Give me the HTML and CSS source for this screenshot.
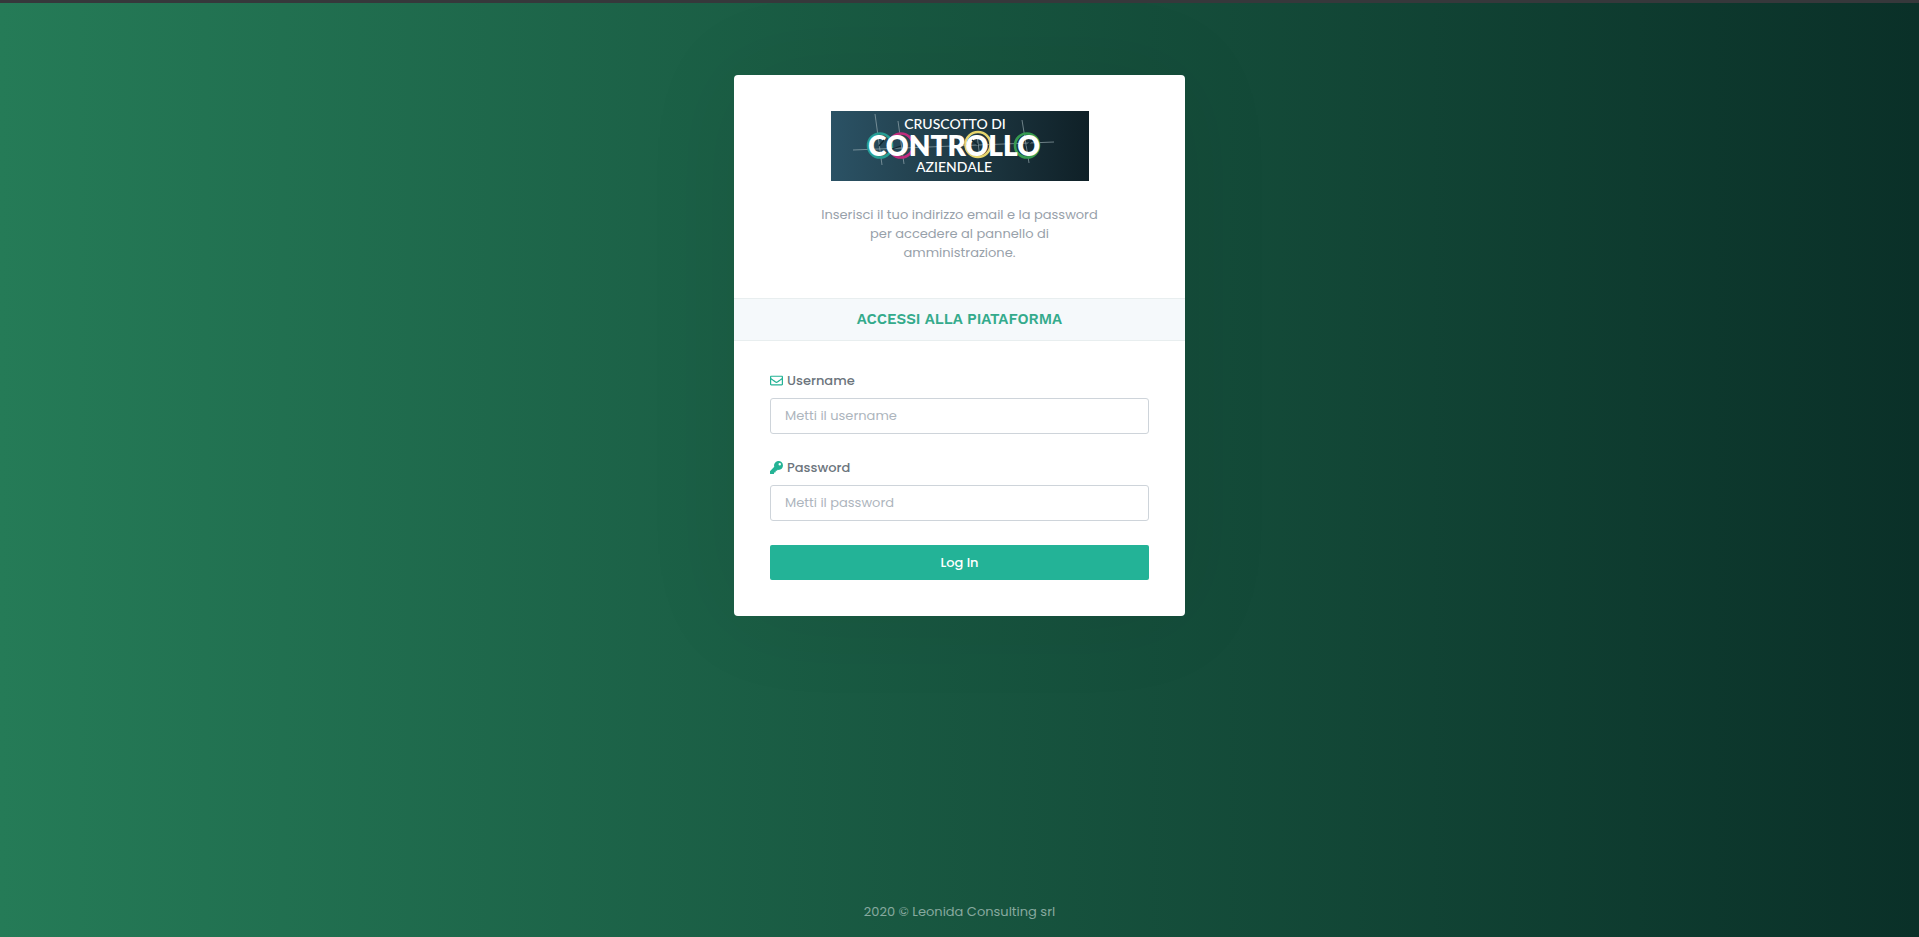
FILE: index.html
```html
<!DOCTYPE html>
<html lang="it">
<head>
<meta charset="utf-8">
<meta name="viewport" content="width=device-width, initial-scale=1">
<title>Cruscotto di Controllo Aziendale</title>
<link rel="stylesheet" href="styles.css">
</head>
<body>
<main class="page">
  <section class="card">
    <header class="intro">
      <svg class="logo" viewBox="0 0 258 70" role="img" aria-label="Cruscotto di Controllo Aziendale">
        <defs>
          <linearGradient id="logo-bg" x1="0" x2="1" y1="0" y2="0">
            <stop offset="0" stop-color="#2b5265"/>
            <stop offset=".5" stop-color="#1f3a45"/>
            <stop offset="1" stop-color="#0f2027"/>
          </linearGradient>
        </defs>
        <rect width="258" height="70" fill="url(#logo-bg)"/>
        <g stroke="#a9bac0" stroke-width=".6" fill="none">
          <path d="M22 39 223 31M44 3 51 54M67 10 73 53M191 9 198 52M146 24 149 47"/>
        </g>
        <g fill="none" stroke-width="2.6">
          <circle cx="49" cy="34.500" r="12" stroke="#279d92"/>
          <circle cx="70" cy="34.500" r="12" stroke="#c02b7c"/>
          <circle cx="147" cy="33.500" r="12.500" stroke="#e6d46c"/>
          <circle cx="196" cy="34.500" r="12" stroke="#369b50"/>
        </g>
        <g class="logo-text">
          <text class="logo-small" x="124" y="18" text-anchor="middle">CRUSCOTTO DI</text>
          <text class="logo-large" x="123" y="45" text-anchor="middle">CONTROLLO</text>
          <text class="logo-small" x="123" y="61" text-anchor="middle">AZIENDALE</text>
        </g>
        <path d="m48 35 5-6M61 38l9-3M147 34l-6-5M196 35l5-6" stroke="#122831" stroke-width="1.300"/>
      </svg>
      <p class="lead">Inserisci il tuo indirizzo email e la password per accedere al pannello di amministrazione.</p>
    </header>
    <h1 class="title">ACCESSI ALLA PIATAFORMA</h1>
    <form class="form">
      <div class="field">
        <label class="label" for="username">
          <svg class="icon" viewBox="0 0 512 512" aria-hidden="true"><path d="M464 64H48C21.500 64 0 85.500 0 112v288c0 26.500 21.500 48 48 48h416c26.500 0 48-21.500 48-48V112c0-26.500-21.500-48-48-48zm0 48v40.800c-22.400 18.300-58.200 46.700-134.600 106.500-16.800 13.200-50.200 45.100-73.400 44.700-23.200.4-56.600-31.500-73.400-44.700C106.200 199.500 70.400 171.100 48 152.800V112h416zM48 400V214.400c22.900 18.200 55.300 43.900 104.900 82.700 21.900 17.200 60.300 55.200 103.100 54.900 42.600.2 80.500-37.200 103.100-54.900 49.500-38.800 82-64.500 104.900-82.700V400H48z"/></svg>
          Username
        </label>
        <input class="input" id="username" type="text" placeholder="Metti il username">
      </div>
      <div class="field">
        <label class="label" for="password">
          <svg class="icon" viewBox="0 0 512 512" aria-hidden="true"><path d="M512 176c0 97.200-78.800 176-176 176-11.200 0-22.200-1.100-32.800-3.100l-24 27A24 24 0 0 1 261.200 384H224v40c0 13.300-10.700 24-24 24h-40v40c0 13.300-10.700 24-24 24H24c-13.300 0-24-10.700-24-24v-78.100c0-6.400 2.500-12.500 7-17l161.800-161.800A176 176 0 1 1 512 176zM336 128a48 48 0 1 0 96 0 48 48 0 1 0-96 0z"/></svg>
          Password
        </label>
        <input class="input" id="password" type="password" placeholder="Metti il password">
      </div>
      <button class="submit" type="submit">Log In</button>
    </form>
  </section>
</main>
<footer class="footer">2020 © Leonida Consulting srl</footer>
</body>
</html>
```
FILE: styles.css
```css
* {
  box-sizing: border-box;
}

body {
  margin: 0;
  min-height: 100vh;
  display: flex;
  flex-direction: column;
  border-top: 3px solid #36383b;
  background: linear-gradient(to right, #257b57, #0a3028);
  color: #6c757d;
  font-family: Poppins, Inter, "Open Sans", sans-serif;
  font-size: 13px;
  line-height: 19px;
}

.page {
  flex: 1;
  display: flex;
  justify-content: center;
  align-items: flex-start;
  padding: 72px 12px 24px;
}

.card {
  width: 100%;
  max-width: 451px;
  overflow: hidden;
  border-radius: 4px;
  background: #fff;
  box-shadow: 0 0 100px rgba(0, 0, 0, 0.07);
}

.intro {
  padding: 36px;
  text-align: center;
}

.logo {
  display: block;
  width: 258px;
  max-width: 100%;
  margin: 0 auto 24px;
}

.logo-text {
  fill: #fff;
  font-family: Lato, "Open Sans", sans-serif;
}

.logo-small {
  font-size: 14px;
  font-weight: 500;
}

.logo-large {
  font-size: 28px;
  font-weight: 800;
}

.lead {
  width: 75%;
  margin: 0 auto;
  color: #98a1aa;
}

.title {
  margin: 0;
  padding: 11px 12px;
  border: solid #e8eeef;
  border-width: 1px 0;
  background: #f5f9fb;
  color: #34ab8c;
  font-family: "Work Sans", Inter, sans-serif;
  font-size: 15px;
  font-weight: 600;
  line-height: 19px;
  text-align: center;
}

.form {
  display: flex;
  flex-direction: column;
  gap: 24px;
  padding: 30px 36px 36px;
}

.field {
  display: flex;
  flex-direction: column;
  gap: 8px;
}

.label {
  display: flex;
  align-items: center;
  gap: 4px;
  font-weight: 500;
}

.icon {
  width: 13px;
  height: 13px;
  fill: #24b395;
}

.input {
  width: 100%;
  height: 36px;
  padding: 0 14px;
  border: 1px solid #ced4da;
  border-radius: 3px;
  background: #fff;
  color: #6c757d;
  font: inherit;
}

.input::placeholder {
  color: #adb5bd;
  opacity: 1;
}

.submit {
  height: 35px;
  border: 0;
  border-radius: 2px;
  background: #23b397;
  color: #fff;
  font: inherit;
  font-weight: 500;
  cursor: pointer;
}

.footer {
  padding: 16px 12px;
  color: #87a99f;
  text-align: center;
}
```
